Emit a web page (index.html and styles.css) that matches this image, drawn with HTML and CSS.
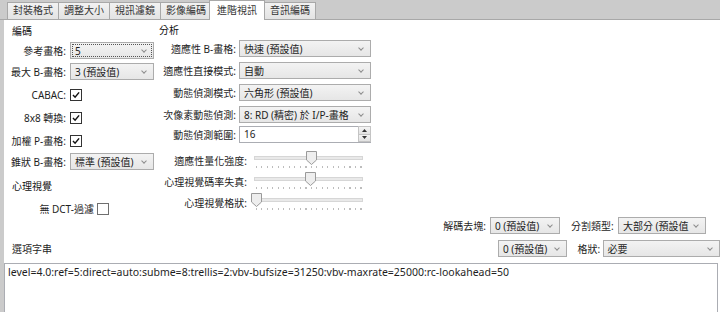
FILE: index.html
```html
<!DOCTYPE html>
<html lang="zh-Hant">
<head>
    <meta charset="UTF-8">
    <title>進階視訊</title>
    <link rel="stylesheet" href="styles.css">
</head>
<body>
    <!-- Tab bar -->
    <div class="tabbar">
        <div class="tab">封裝格式</div>
        <div class="tab">調整大小</div>
        <div class="tab">視訊濾鏡</div>
        <div class="tab">影像編碼</div>
        <div class="tab active">進階視訊</div>
        <div class="tab">音訊編碼</div>
    </div>

    <div class="panel">
        <div class="columns">
            <!-- Encoding group -->
            <section class="group group-encode">
                <div class="group-title">編碼</div>
                <div class="row">
                    <span class="lbl lbl-enc">參考畫格:</span>
                    <div class="combo combo-enc focused"><span>5</span></div>
                </div>
                <div class="row mt4">
                    <span class="lbl lbl-enc">最大 B-畫格:</span>
                    <div class="combo combo-enc"><span>3 (預設值)</span></div>
                </div>
                <div class="row mt6">
                    <span class="lbl lbl-enc">CABAC:</span>
                    <span class="check"><svg viewBox="0 0 11 11"><path d="M2.2 5.6 L4.5 8 L8.9 2.6" /></svg></span>
                </div>
                <div class="row mt6">
                    <span class="lbl lbl-enc">8x8 轉換:</span>
                    <span class="check"><svg viewBox="0 0 11 11"><path d="M2.2 5.6 L4.5 8 L8.9 2.6" /></svg></span>
                </div>
                <div class="row mt6">
                    <span class="lbl lbl-enc">加權 P-畫格:</span>
                    <span class="check"><svg viewBox="0 0 11 11"><path d="M2.2 5.6 L4.5 8 L8.9 2.6" /></svg></span>
                </div>
                <div class="row mt4">
                    <span class="lbl lbl-enc">錐狀 B-畫格:</span>
                    <div class="combo combo-enc"><span>標準 (預設值)</span></div>
                </div>

                <div class="group-title sub">心理視覺</div>
                <div class="row mt4">
                    <span class="lbl lbl-dct">無 DCT-過濾</span>
                    <span class="check empty"></span>
                </div>
            </section>

            <!-- Analysis group -->
            <section class="group group-analysis">
                <div class="group-title">分析</div>
                <div class="row">
                    <span class="lbl lbl-ana">適應性 B-畫格:</span>
                    <div class="combo combo-ana"><span>快速 (預設值)</span></div>
                </div>
                <div class="row mt5">
                    <span class="lbl lbl-ana">適應性直接模式:</span>
                    <div class="combo combo-ana"><span>自動</span></div>
                </div>
                <div class="row mt5">
                    <span class="lbl lbl-ana">動態偵測模式:</span>
                    <div class="combo combo-ana"><span>六角形 (預設值)</span></div>
                </div>
                <div class="row mt5">
                    <span class="lbl lbl-ana">次像素動態偵測:</span>
                    <div class="combo combo-ana"><span>8: RD (精密) 於 I/P-畫格</span></div>
                </div>
                <div class="row mt3">
                    <span class="lbl lbl-ana">動態偵測範圍:</span>
                    <div class="spin">
                        <span class="spin-value">16</span>
                        <span class="spin-buttons">
                            <span class="spin-btn"><svg viewBox="0 0 7 4"><path d="M0 4 L3.5 0 L7 4 Z" /></svg></span>
                            <span class="spin-btn"><svg viewBox="0 0 7 4"><path d="M0 0 L3.5 4 L7 0 Z" /></svg></span>
                        </span>
                    </div>
                </div>

                <div class="slider-row mt7">
                    <span class="lbl lbl-slider">適應性量化強度:</span>
                    <div class="slider">
                        <div class="track"></div>
                        <div class="ticks"></div>
                        <svg class="thumb" style="left: 55px" viewBox="0 0 11 14"><path d="M0.5 0.5 H10.5 V9 L5.5 13.5 L0.5 9 Z" /></svg>
                    </div>
                </div>
                <div class="slider-row mt1">
                    <span class="lbl lbl-slider">心理視覺碼率失真:</span>
                    <div class="slider">
                        <div class="track"></div>
                        <div class="ticks"></div>
                        <svg class="thumb" style="left: 54px" viewBox="0 0 11 14"><path d="M0.5 0.5 H10.5 V9 L5.5 13.5 L0.5 9 Z" /></svg>
                    </div>
                </div>
                <div class="slider-row mt1">
                    <span class="lbl lbl-slider">心理視覺格狀:</span>
                    <div class="slider">
                        <div class="track"></div>
                        <div class="ticks"></div>
                        <svg class="thumb" style="left: 0px" viewBox="0 0 11 14"><path d="M0.5 0.5 H10.5 V9 L5.5 13.5 L0.5 9 Z" /></svg>
                    </div>
                </div>
            </section>
        </div>

        <!-- Bottom options -->
        <div class="bottom-row">
            <span class="bottom-left right">解碼去塊:</span>
            <div class="combo combo-small"><span>0 (預設值)</span></div>
            <span class="lbl lbl-part">分割類型:</span>
            <div class="combo combo-part"><span>大部分 (預設值</span></div>
        </div>
        <div class="bottom-row mt6">
            <span class="bottom-left">選項字串</span>
            <div class="combo combo-small"><span>0 (預設值)</span></div>
            <span class="lbl lbl-trellis">格狀:</span>
            <div class="combo combo-trellis"><span>必要</span></div>
        </div>

        <div class="option-string">level=4.0:ref=5:direct=auto:subme=8:trellis=2:vbv-bufsize=31250:vbv-maxrate=25000:rc-lookahead=50</div>
    </div>
</body>
</html>
```

FILE: styles.css
```css
/* Base */
body {
    margin: 0;
    width: 720px;
    height: 312px;
    overflow: hidden;
    background-color: #cbcbcb;
    font-family: "Noto Sans", "Noto Sans CJK TC", sans-serif;
    font-size: 10px;
    color: #1e1e1e;
}

/* Tabs */
.tabbar {
    display: flex;
    align-items: flex-end;
    height: 19px;
    padding-left: 7px;
    border-bottom: 1px solid #a8a8a8;
}
.tab {
    height: 16px;
    line-height: 15px;
    padding: 0 5px;
    margin-right: -1px;
    border: 1px solid #a8a8a8;
    border-bottom: none;
    background: linear-gradient(#f2f2f2, #e3e3e3);
    color: #333;
    white-space: nowrap;
}
.tab.active {
    position: relative;
    height: 19px;
    line-height: 18px;
    margin: 0 -1px -1px -2px;
    padding: 0 7px;
    background: #fff;
    z-index: 1;
}

/* Panel */
.panel {
    margin-left: 4px;
    height: 292px;
    background-color: #fff;
}
.columns {
    display: flex;
    height: 197px;
}
.group-title {
    height: 22px;
    line-height: 22px;
    padding-left: 8px;
    color: #111;
}
.group-title.sub {
    height: 20px;
    line-height: 20px;
    margin-top: 6px;
}
.group-encode { width: 151px; }
.group-analysis { width: 220px; }
.group-analysis .group-title {
    height: 20px;
    line-height: 20px;
    padding-left: 4px;
}

.row {
    display: flex;
    align-items: center;
    height: 17px;
}
.mt1 { margin-top: 1px; }
.mt3 { margin-top: 3px; }
.mt4 { margin-top: 4px; }
.mt5 { margin-top: 5px; }
.mt6 { margin-top: 6px; }
.mt7 { margin-top: 7px; }

.lbl {
    text-align: right;
    white-space: nowrap;
    flex-shrink: 0;
}
.lbl-enc { width: 62px; margin-right: 4px; }
.lbl-dct { width: 90px; margin-right: 3px; }
.lbl-ana { width: 81px; margin-right: 3px; }
.lbl-slider { width: 92px; margin-right: 4px; }
.lbl-part { width: 43px; margin-left: 11px; margin-right: 4px; text-align: left; }
.lbl-trellis { width: 21px; margin-left: 11px; margin-right: 4px; text-align: left; }

/* Combo boxes */
.combo {
    display: flex;
    align-items: center;
    justify-content: space-between;
    box-sizing: border-box;
    height: 17px;
    padding: 0 7px 0 4px;
    border: 1px solid #acacac;
    background: linear-gradient(#f3f3f3, #e6e6e6);
    white-space: nowrap;
    overflow: hidden;
}
.combo::after {
    content: "";
    width: 3px;
    height: 3px;
    margin-bottom: 2px;
    border-right: 1px solid #8c8c8c;
    border-bottom: 1px solid #8c8c8c;
    transform: rotate(45deg);
    flex-shrink: 0;
}
.combo.focused { outline: 1px dotted #555; outline-offset: -3px; }
.combo-enc { width: 84px; }
.combo-ana { width: 132px; }
.combo-small { width: 70px; }
.combo-part { width: 88px; }
.combo-trellis { width: 120px; }

/* Checkboxes */
.check {
    display: inline-block;
    box-sizing: border-box;
    width: 12px;
    height: 12px;
    border: 1px solid #333;
    background: #fff;
}
.check svg {
    display: block;
    width: 10px;
    height: 10px;
}
.check path {
    fill: none;
    stroke: #111;
    stroke-width: 1.6;
}
.check.empty { border-color: #6f6f6f; }

/* Spin box */
.spin {
    display: flex;
    box-sizing: border-box;
    width: 132px;
    height: 17px;
    border: 1px solid #abadb3;
    background: #fff;
}
.spin-value {
    flex: 1;
    padding-left: 4px;
    line-height: 15px;
}
.spin-buttons {
    display: flex;
    flex-direction: column;
    width: 12px;
}
.spin-btn {
    display: flex;
    align-items: center;
    justify-content: center;
    height: 7px;
    border: 1px solid #c4c4c4;
    margin: -1px -1px 0 0;
    background: linear-gradient(#f4f4f4, #e2e2e2);
}
.spin-btn svg { width: 5px; height: 3px; }
.spin-btn path { fill: #333; }

/* Sliders */
.slider-row {
    display: flex;
    align-items: center;
    height: 20px;
}
.slider {
    position: relative;
    width: 115px;
    height: 20px;
}
.track {
    height: 2px;
    margin: 6px 3px 0 3px;
    border: 1px solid #d6d6d6;
    background: #e9e9e9;
}
.ticks {
    height: 2px;
    margin: 6px 3px 0 5px;
    background: repeating-linear-gradient(to right, #bdbdbd 0 1px, transparent 1px 5.5px);
}
.thumb {
    position: absolute;
    top: 1px;
    width: 11px;
    height: 14px;
}
.thumb path {
    fill: #eeeeee;
    stroke: #9a9a9a;
}

/* Bottom rows */
.bottom-row {
    display: flex;
    align-items: center;
    height: 17px;
}
.bottom-left {
    width: 478px;
    margin-right: 8px;
    padding-left: 8px;
    flex-shrink: 0;
}
.bottom-left.right { text-align: right; padding-left: 0; width: 482px; margin-right: 4px; }

/* Option string box */
.option-string {
    box-sizing: border-box;
    width: 714px;
    height: 60px;
    margin-top: 6px;
    padding: 1px 3px;
    border: 1px solid #abadb3;
    background: #fff;
    font-size: 10.5px;
    white-space: nowrap;
    overflow: hidden;
}
```
